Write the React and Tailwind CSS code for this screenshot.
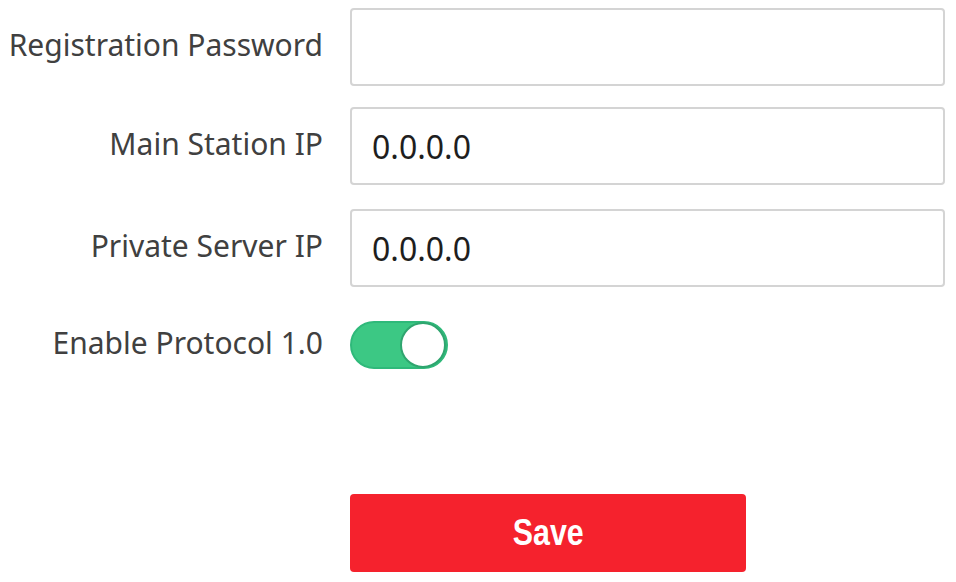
import React, { useState } from 'react';

const LABEL = 'w-[323px] shrink-0 pb-[4px] text-right text-[30px] text-[#404040] leading-none';

function Field({ label, value, className = '' }) {
  return (
    <div className={`flex items-center ${className}`}>
      <label className={LABEL}>{label}</label>
      <input
        defaultValue={value}
        className="ml-[27px] h-[78px] w-[595px] rounded-[4px] border-2 border-[#d4d4d4] bg-white px-[20px] text-[32px] text-[#1e1e1e] outline-none"
      />
    </div>
  );
}

function Toggle({ on, onChange }) {
  return (
    <button
      type="button"
      onClick={() => onChange(!on)}
      className={`ml-[27px] flex h-[48px] w-[98px] items-center rounded-full border-2 border-[#2fb97a] p-0 ${
        on ? 'bg-[#3cc884] justify-end' : 'bg-[#e5e5e5] justify-start'
      }`}
    >
      <span className="h-[46px] w-[46px] rounded-full border-2 border-[#2fa56f] bg-white" />
    </button>
  );
}

export default function App() {
  const [enabled, setEnabled] = useState(true);

  return (
    <div className="h-[582px] w-[956px] bg-white font-['Noto_Sans',sans-serif]">
      <div className="pt-[8px]">
        <Field label="Registration Password" value="" />
        <Field label="Main Station IP" value="0.0.0.0" className="mt-[21px]" />
        <Field label="Private Server IP" value="0.0.0.0" className="mt-[24px]" />

        <div className="mt-[34px] flex items-center">
          <span className={LABEL}>Enable Protocol 1.0</span>
          <Toggle on={enabled} onChange={setEnabled} />
        </div>

        <div className="mt-[125px] flex">
          <button
            type="button"
            className="ml-[350px] h-[78px] w-[396px] rounded-[4px] bg-[#f5222d] font-['Liberation_Sans',sans-serif] text-[37px] font-bold text-white"
          >
            <span className="inline-block scale-x-[0.82]">Save</span>
          </button>
        </div>
      </div>
    </div>
  );
}
